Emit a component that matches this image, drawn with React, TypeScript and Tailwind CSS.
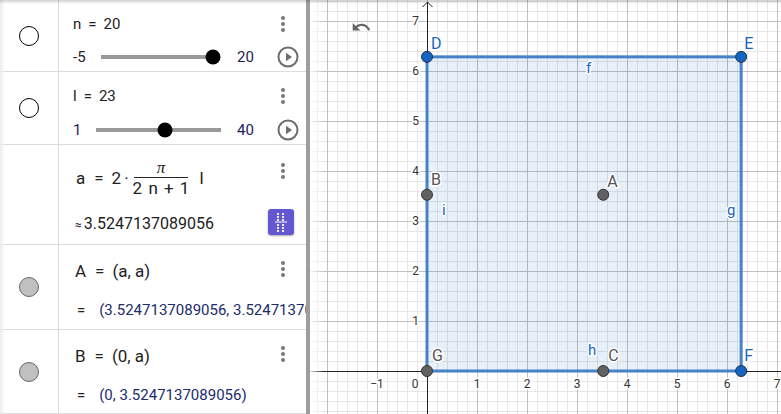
import React from "react";

const FONT = { fontFamily: "Roboto, 'Noto Sans', sans-serif" };

function Dots() {
  return (
    <div className="flex flex-col items-center gap-[2px] w-[6px]">
      <span className="block h-[4px] w-[4px] rounded-full bg-[#777]" />
      <span className="block h-[4px] w-[4px] rounded-full bg-[#777]" />
      <span className="block h-[4px] w-[4px] rounded-full bg-[#777]" />
    </div>
  );
}

function PlayButton() {
  return (
    <svg width="22" height="22" viewBox="0 0 22 22">
      <circle cx="11" cy="11" r="9.5" fill="none" stroke="#6d6d6d" strokeWidth="2" />
      <path d="M9 6.8 L15 11 L9 15.2 Z" fill="#6d6d6d" />
    </svg>
  );
}

function Row({ h, icon, children, dotsTop }: { h: number; icon?: React.ReactNode; children: React.ReactNode; dotsTop: number }) {
  return (
    <div className="flex border-b border-[#dcdcdc]" style={{ height: h }}>
      <div className="w-[59px] shrink-0 border-r border-[#dcdcdc] flex items-center justify-center">{icon}</div>
      <div className="relative flex-1 overflow-hidden">
        {children}
        <div className="absolute right-[20px]" style={{ top: dotsTop }}>
          <Dots />
        </div>
      </div>
    </div>
  );
}

function Eq({ left, right }: { left: string; right: string }) {
  return (
    <div className="flex items-baseline pl-[16px] pt-[14px] text-[17px] whitespace-nowrap">
      <span>{left}</span>
      <span className="ml-[9px] mr-[8px]">=</span>
      <span>{right}</span>
    </div>
  );
}

function AlgebraPanel() {
  return (
    <div className="relative w-[306px] shrink-0 bg-white text-[#222]" style={FONT}>
      <div className="absolute left-0 top-0 bottom-0 w-[5px] bg-gradient-to-r from-[#ececec] to-transparent" />
      <Row h={72} dotsTop={16} icon={<span className="block h-[20px] w-[20px] rounded-full border border-black" />}>
        <div className="pl-[14px] pt-[13px] text-[15px]">
          n<span className="mx-[7px]">=</span>20
        </div>
        <div className="flex items-center pl-[14px] mt-[10px]">
          <span className="text-[15px] w-[28px]">-5</span>
          <div className="relative h-[4px] w-[112px] bg-[#999]">
            <span className="absolute left-full top-1/2 h-[15px] w-[15px] -translate-x-1/2 -translate-y-1/2 rounded-full bg-black" />
          </div>
          <span className="ml-[24px] w-[40px] text-[15px] text-[#1c1c55]">20</span>
          <PlayButton />
        </div>
      </Row>
      <Row h={73} dotsTop={16} icon={<span className="block h-[20px] w-[20px] rounded-full border border-black" />}>
        <div className="pl-[14px] pt-[13px] text-[15px]">
          l<span className="mx-[7px]">=</span>23
        </div>
        <div className="flex items-center pl-[14px] mt-[11px]">
          <span className="w-[23px] text-[15px] text-[#1c1c55]">1</span>
          <div className="relative h-[4px] w-[125px] bg-[#999]">
            <span className="absolute left-[55%] top-1/2 h-[15px] w-[15px] -translate-x-1/2 -translate-y-1/2 rounded-full bg-black" />
          </div>
          <span className="ml-[16px] w-[40px] text-[15px] text-[#1c1c55]">40</span>
          <PlayButton />
        </div>
      </Row>
      <Row h={100} dotsTop={18}>
        <div className="flex items-center pl-[17px] pt-[17px] text-[17px] h-[50px]">
          <span>a</span>
          <span className="ml-[9px]">=</span>
          <span className="ml-[8px]">2</span>
          <span className="ml-[3px]">·</span>
          <span className="ml-[4px] inline-flex flex-col items-center">
            <span className="text-[17px] leading-[18px] italic font-serif">π</span>
            <span className="block h-px w-[54px] bg-[#222]" />
            <span className="text-[17px] leading-[20px] [word-spacing:2px]">2 n + 1</span>
          </span>
          <span className="ml-[10px]">l</span>
        </div>
        <div className="pl-[16px] mt-[17px] text-[16px]">
          <span className="text-[12px] mr-[2px]">≈</span>3.5247137089056
        </div>
        <div className="absolute right-[12px] top-[64px] flex h-[26px] w-[26px] items-center justify-center rounded-[3px] bg-[#6557d2] shadow-[0_1px_2px_rgba(0,0,0,0.35)]">
          <svg width="14" height="20" viewBox="0 0 14 20">
            {[1, 4, 7].map((y) =>
              [3, 8].map((x) => <rect key={`a${x}${y}`} x={x} y={y} width="2" height="2" fill="#fff" opacity="0.9" />)
            )}
            <rect x="1" y="9.5" width="12" height="1" fill="#fff" />
            {[12, 15, 18].map((y) =>
              [3, 8].map((x) => <rect key={`b${x}${y}`} x={x} y={y} width="2" height="2" fill="#fff" opacity="0.9" />)
            )}
          </svg>
        </div>
      </Row>
      <Row h={85} dotsTop={16} icon={<span className="block h-[20px] w-[20px] rounded-full border border-[#666] bg-[#c0c0c0]" />}>
        <Eq left="A" right="(a, a)" />
        <div className="pl-[18px] mt-[14px] text-[15px] whitespace-nowrap">
          <span className="mr-[14px]">=</span>
          <span className="text-[#1b2b6b]">(3.5247137089056, 3.5247137089056)</span>
        </div>
      </Row>
      <Row h={84} dotsTop={16} icon={<span className="block h-[20px] w-[20px] rounded-full border border-[#666] bg-[#c0c0c0]" />}>
        <Eq left="B" right="(0, a)" />
        <div className="pl-[18px] mt-[14px] text-[15px] whitespace-nowrap">
          <span className="mr-[14px]">=</span>
          <span className="text-[#1b2b6b]">(0, 3.5247137089056)</span>
        </div>
      </Row>
    </div>
  );
}

function Graph() {
  const W = 471;
  const H = 414;
  const ox = 117;
  const oy = 371;
  const u = 50;
  const side = 2 * Math.PI * u;
  const a = 3.5247137089056 * u;
  const vx: number[] = [];
  for (let k = -11; k <= 35; k++) vx.push(k);
  const hy: number[] = [];
  for (let k = -4; k <= 37; k++) hy.push(k);
  const label = { paintOrder: "stroke" as const, stroke: "#fff", strokeWidth: 3, strokeLinejoin: "round" as const };

  return (
    <div className="relative flex-1 bg-white">
      <svg width={W} height={H} className="block" style={FONT}>
        {vx.filter((k) => k % 5 !== 0).map((k) => (
          <line key={`mv${k}`} x1={ox + k * 10 + 0.5} y1={0} x2={ox + k * 10 + 0.5} y2={H} stroke="#e6e6e6" />
        ))}
        {hy.filter((k) => k % 5 !== 0).map((k) => (
          <line key={`mh${k}`} x1={0} y1={oy - k * 10 + 0.5} x2={W} y2={oy - k * 10 + 0.5} stroke="#e6e6e6" />
        ))}
        {vx.filter((k) => k % 5 === 0).map((k) => (
          <line key={`Mv${k}`} x1={ox + k * 10 + 0.5} y1={0} x2={ox + k * 10 + 0.5} y2={H} stroke="#c0c0c0" />
        ))}
        {hy.filter((k) => k % 5 === 0).map((k) => (
          <line key={`Mh${k}`} x1={0} y1={oy - k * 10 + 0.5} x2={W} y2={oy - k * 10 + 0.5} stroke="#c0c0c0" />
        ))}

        <rect x={ox} y={oy - side} width={side} height={side} fill="rgba(21,101,192,0.1)" />

        <line x1={ox + 0.5} y1={2} x2={ox + 0.5} y2={H} stroke="#222" />
        <path d={`M${ox - 4.5} 7 L${ox + 0.5} 2 L${ox + 5.5} 7`} fill="none" stroke="#222" />
        <line x1={0} y1={oy + 0.5} x2={W} y2={oy + 0.5} stroke="#222" />

        <rect x={ox} y={oy - side} width={side} height={side} fill="none" stroke="#4582c8" strokeWidth="3" />

        {[-1, 1, 2, 3, 4, 5, 6, 7].map((n) => (
          <text key={`xl${n}`} x={ox + n * u} y={oy + 17} fontSize="12" fill="#333" textAnchor="middle" style={label}>
            {n < 0 ? `−${-n}` : n}
          </text>
        ))}
        <text x={ox - 12} y={oy + 17} fontSize="12" fill="#333" textAnchor="middle" style={label}>0</text>
        {[1, 2, 3, 4, 5, 6, 7].map((n) => (
          <text key={`yl${n}`} x={ox - 8} y={oy - n * u + 4} fontSize="12" fill="#333" textAnchor="end" style={label}>
            {n}
          </text>
        ))}

        <text x={ox + 4} y={49} fontSize="16" fill="#1565c0" style={label}>D</text>
        <text x={ox + side + 3} y={49} fontSize="16" fill="#1565c0" style={label}>E</text>
        <text x={ox + side + 3} y={oy - 10} fontSize="16" fill="#1565c0" style={label}>F</text>
        <text x={ox + 5} y={oy - 10} fontSize="16" fill="#555" style={label}>G</text>
        <text x={ox + a + 5} y={oy - 10} fontSize="16" fill="#555" style={label}>C</text>
        <text x={ox + 4} y={oy - a - 10} fontSize="16" fill="#555" style={label}>B</text>
        <text x={ox + a + 4} y={oy - a - 8} fontSize="16" fill="#555" style={label}>A</text>
        <text x={ox + 159} y={73} fontSize="15" fill="#1565c0" style={label}>f</text>
        <text x={ox + 300} y={215} fontSize="15" fill="#1565c0" style={label}>g</text>
        <text x={ox + 161} y={355} fontSize="15" fill="#1565c0" style={label}>h</text>
        <text x={ox + 15} y={215} fontSize="15" fill="#1565c0" style={label}>i</text>

        {[
          [ox, oy - side],
          [ox + side, oy - side],
          [ox + side, oy],
        ].map(([x, y], i) => (
          <circle key={`bp${i}`} cx={x} cy={y} r="5.5" fill="#1565c0" stroke="#1f2f4f" strokeWidth="1" />
        ))}
        {[
          [ox, oy],
          [ox + a, oy],
          [ox, oy - a],
          [ox + a, oy - a],
        ].map(([x, y], i) => (
          <circle key={`gp${i}`} cx={x} cy={y} r="5.5" fill="#616161" stroke="#333" strokeWidth="1" />
        ))}

        <g transform="translate(41 17) scale(0.85)">
          <path
            d="M12.5 8c-2.65 0-5.05.99-6.9 2.6L2 7v9h9l-3.62-3.62c1.39-1.16 3.16-1.88 5.12-1.88 3.54 0 6.55 2.31 7.6 5.5l2.37-.78C21.08 11.03 17.15 8 12.5 8z"
            fill="#666"
          />
        </g>
      </svg>
      <div className="absolute left-0 top-0 bottom-0 w-[14px] bg-gradient-to-r from-[rgba(255,255,255,0.85)] to-transparent" />
    </div>
  );
}

export default function App() {
  return (
    <div className="relative flex h-[414px] w-[781px] overflow-hidden bg-white">
      <AlgebraPanel />
      <div className="w-[4px] shrink-0 bg-[#9e9e9e]" />
      <Graph />
      <div className="pointer-events-none absolute left-0 right-0 top-0 h-[4px] bg-gradient-to-b from-[rgba(0,0,0,0.18)] to-transparent" />
    </div>
  );
}
